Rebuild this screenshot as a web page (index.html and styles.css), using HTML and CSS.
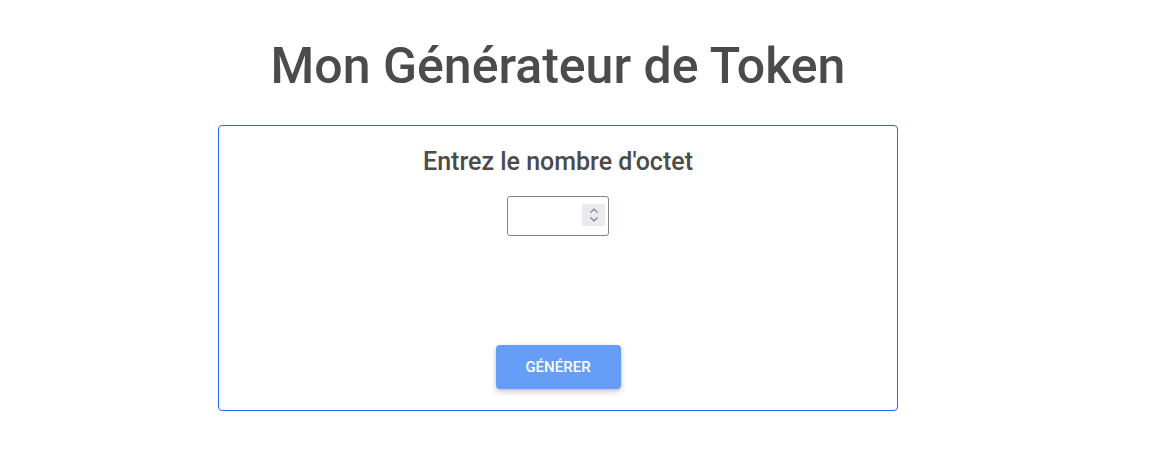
FILE: index.html
```html
<!DOCTYPE html>
<html lang="fr">
<head>
<meta charset="utf-8">
<title>Mon Générateur de Token</title>
<link rel="stylesheet" href="styles.css">
</head>
<body>
<main class="page">
  <h1 class="title">Mon Générateur de Token</h1>
  <section class="card">
    <h2 class="card-title">Entrez le nombre d'octet</h2>
    <div class="field">
      <input class="number-input" type="text" aria-label="nombre d'octet">
      <span class="spinner" aria-hidden="true">
        <svg width="12" height="18" viewBox="0 0 12 18"><path d="M2.5 6.5 L6 3 L9.5 6.5 M2.5 11.5 L6 15 L9.5 11.5" fill="none" stroke="#7b7b86" stroke-width="1.2"/></svg>
      </span>
    </div>
    <button class="btn" type="button">Générer</button>
  </section>
</main>
</body>
</html>
```
FILE: styles.css
```css
html, body {
  margin: 0;
  padding: 0;
  background: #ffffff;
}
body {
  font-family: Roboto, "Liberation Sans", sans-serif;
  color: #4a4a4a;
}
.page {
  width: 1116px;
  display: flex;
  flex-direction: column;
  align-items: center;
  padding-top: 33px;
}
.title {
  margin: 0;
  font-size: 50px;
  font-weight: 500;
  line-height: 66px;
  color: #4b4b4b;
}
.card {
  margin-top: 26px;
  width: 678px;
  height: 284px;
  border: 1px solid #1a6cf5;
  border-radius: 4px;
  display: flex;
  flex-direction: column;
  align-items: center;
  box-sizing: content-box;
}
.card-title {
  margin: 20px 0 0;
  font-size: 25px;
  font-weight: 500;
  line-height: 32px;
  color: #4b4b4b;
}
.field {
  position: relative;
  margin-top: 18px;
  width: 102px;
  height: 40px;
}
.number-input {
  box-sizing: border-box;
  width: 102px;
  height: 40px;
  border: 1px solid #858590;
  border-radius: 3px;
  padding: 0 30px 0 8px;
  font: 16px Roboto, sans-serif;
  outline: none;
}
.spinner {
  position: absolute;
  top: 8px;
  right: 4px;
  width: 23px;
  height: 22px;
  background: #ebebee;
  display: flex;
  align-items: center;
  justify-content: center;
}
.btn {
  margin-top: 109px;
  width: 125px;
  height: 44px;
  border: none;
  border-radius: 4px;
  background: #669df6;
  color: #ffffff;
  font-family: Roboto, sans-serif;
  font-size: 15px;
  font-weight: 500;
  text-transform: uppercase;
  letter-spacing: 0;
  box-shadow: 0 3px 6px rgba(0,0,0,0.18), 0 1px 3px rgba(0,0,0,0.1);
}
```
